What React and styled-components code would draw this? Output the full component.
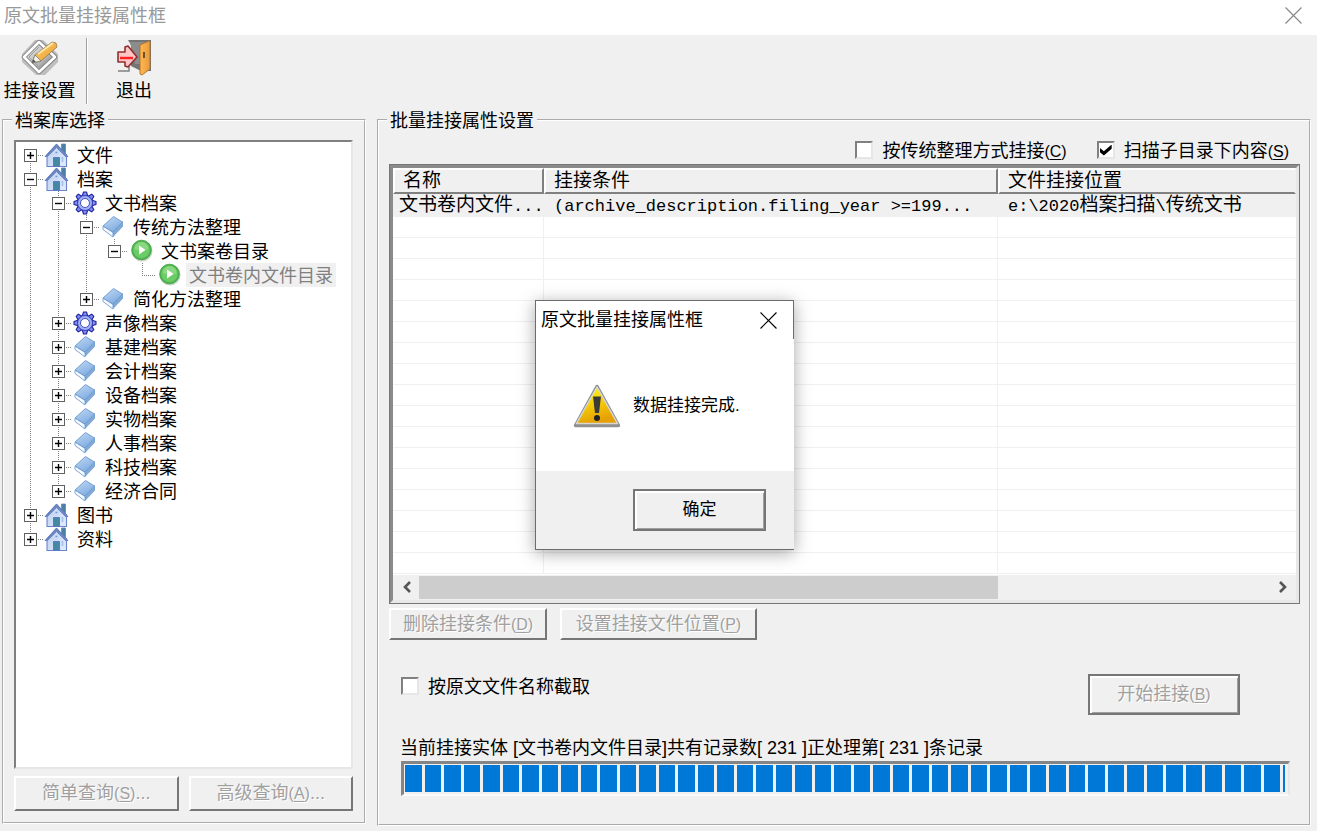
import React from 'react';
import styled, { createGlobalStyle, css } from 'styled-components';

const face = '#f0f0f0';
const shadow = '#767676';

const GlobalStyle = createGlobalStyle`
  *, *::before, *::after { box-sizing: border-box; }
  body {
    margin: 0;
    background: ${face};
    color: #000;
    font: 18px/24px "Liberation Sans", "Noto Sans CJK SC", sans-serif;
  }
  button, input { font: inherit; color: inherit; }
  ul { list-style: none; margin: 0; padding: 0; }
`;

const Window = styled.div`
  position: relative;
  min-height: 100vh;
  display: flex;
  flex-direction: column;
  background: ${face};
`;

const TitleBar = styled.header`
  display: flex;
  align-items: center;
  justify-content: space-between;
  height: 36px;
  padding: 0 15px 4px 4px;
  background: #fff;
  color: #999;
  border-bottom: 1px solid ${face};
`;

const Title = styled.h1`
  margin: 0;
  font-size: 18px;
  font-weight: 400;
`;

const CloseButton = styled.button`
  display: flex;
  padding: 0;
  border: 0;
  background: none;
`;

const Toolbar = styled.nav`
  display: flex;
  height: 72px;
  padding: 2px 3px;
`;

const ToolButton = styled.button`
  display: flex;
  flex-direction: column;
  align-items: center;
  width: ${(p) => (p.$wide ? 92 : 73)}px;
  padding: 0;
  border: 0;
  background: none;
  white-space: nowrap;
  svg { margin: 1px 0 3px; flex: none; }
`;

const Separator = styled.span`
  width: 2px;
  height: 66px;
  margin-left: 10px;
  background: linear-gradient(to right, #a0a0a0 1px, #fff 1px);
`;

const Panels = styled.main`
  flex: 1;
  display: flex;
  gap: 11px;
  padding: 0 6px 5px 2px;
`;

const Group = styled.fieldset`
  display: flex;
  flex-direction: column;
  min-width: 0;
  margin: 0;
  border: 2px groove #fff;
  padding: 0 10px;
  ${(p) => p.$side
    ? css`width: 364px; flex: none; padding: 8px 11px 11px 10px; margin-bottom: 2px;`
    : css`flex: 1; padding-bottom: 28px;`}
`;

const Legend = styled.legend`
  margin-left: -2px;
  padding: 2px 3px 0;
  line-height: 22px;
`;

const TreeBox = styled.ul`
  flex: 1;
  border: 2px solid;
  border-color: #808080 #e6e6e6 #e6e6e6 #808080;
  background: #fff;
  && { padding-top: 1px; }
`;

const TreeRow = styled.li`
  display: flex;
  align-items: center;
  height: 24px;
  > svg { flex: none; }
`;

const dotsDown = 'repeating-linear-gradient(to bottom, #808080 0 1px, transparent 1px 2px)';
const dotsAcross = 'repeating-linear-gradient(to right, #808080 0 1px, transparent 1px 2px)';

const Guide = styled.span`
  display: flex;
  align-items: center;
  justify-content: center;
  flex: none;
  width: 28px;
  height: 24px;
  background-repeat: no-repeat;
  ${(p) => {
    const images = [];
    if (p.$up) images.push(`${dotsDown} 14px 0 / 1px 12px no-repeat`);
    if (p.$down) images.push(`${dotsDown} 14px 12px / 1px 12px no-repeat`);
    if (p.$branch) images.push(`${dotsAcross} 14px 12px / 14px 1px no-repeat`);
    return images.length ? css`background: ${images.join(', ')};` : '';
  }}
`;

const Expander = styled.button`
  display: flex;
  width: 13px;
  height: 13px;
  padding: 0;
  border: 1px solid #606060;
  background: #fff;
`;

const NodeLabel = styled.span`
  margin-left: 5px;
  padding: 2px 3px 0;
  line-height: 22px;
  white-space: nowrap;
  ${(p) => p.$selected && css`background: ${face}; color: #808080;`}
`;

const QueryBar = styled.div`
  display: flex;
  gap: 10px;
  margin-top: 7px;
`;

const PushButton = styled.button`
  flex: ${(p) => (p.$fill ? '1' : 'none')};
  width: ${(p) => (p.$width ? `${p.$width}px` : 'auto')};
  height: ${(p) => p.$height || 32}px;
  padding: 0;
  background: ${face};
  white-space: nowrap;
  border: 2px solid;
  border-color: #fff ${shadow} ${shadow} #fff;
  ${(p) => p.$strong && css`
    border-color: ${shadow};
    box-shadow: inset 2px 2px #fff, inset -1px -1px #a0a0a0;
  `}
  &:disabled { color: #a0a0a0; text-shadow: 1px 1px #fff; }
`;

const Mnemonic = styled.span`
  font-size: 16px;
  u { text-underline-offset: 2px; }
`;

const Options = styled.div`
  display: flex;
  justify-content: flex-end;
  gap: 30px;
  padding: 6px 10px 2px 0;
`;

const CheckLabel = styled.label`
  display: flex;
  align-items: center;
  gap: 9px;
  height: 24px;
  white-space: nowrap;
  span { line-height: 22px; }
  > span { padding-top: 2px; }
`;

const CheckBox = styled.input.attrs({ type: 'checkbox' })`
  appearance: none;
  display: grid;
  place-items: center;
  width: 18px;
  height: 18px;
  margin: 0;
  background: #fff;
  border: 2px solid;
  border-color: #808080 #e6e6e6 #e6e6e6 #808080;
  &:checked::after {
    content: '';
    width: 12px;
    height: 11px;
    background: #000;
    clip-path: polygon(0 30%, 35% 62%, 100% 0, 100% 38%, 35% 100%, 0 68%);
  }
`;

const ListFrame = styled.div`
  flex: 1;
  display: flex;
  margin-right: -1px;
  border: 1px solid ${shadow};
`;

const ListInner = styled.div`
  flex: 1;
  min-width: 0;
  display: flex;
  flex-direction: column;
  border: 3px solid;
  border-color: #8a8a8a #e8e8e8 #e8e8e8 #8a8a8a;
  background: #fff;
`;

const Table = styled.table`
  width: 100%;
  table-layout: fixed;
  border-collapse: separate;
  border-spacing: 0;
  font-size: 19px;
`;

const HeadCell = styled.th`
  width: ${(p) => (p.$width ? `${p.$width}px` : 'auto')};
  height: 26px;
  padding: 0 0 0 8px;
  text-align: left;
  font-weight: 400;
  line-height: 22px;
  background: ${face};
  border: 2px solid;
  border-color: #fff ${(p) => (p.$width ? '#808080' : face)} #808080 #fff;
`;

const Cell = styled.td`
  height: 21px;
  padding: ${(p) => (p.$filled ? 2 : 0)}px 0 0 ${(p) => (p.$first ? 6 : 10)}px;
  line-height: 18px;
  white-space: nowrap;
  overflow: hidden;
  border-bottom: 1px solid ${face};
  border-right: ${(p) => (p.$last ? 0 : 1)}px solid ${face};
  background: ${(p) => (p.$filled ? face : '#fff')};
`;

const Mono = styled.span`
  font-family: "Liberation Mono", monospace;
  font-size: 17px;
  line-height: 18px;
`;

const ScrollBar = styled.div`
  display: flex;
  align-items: center;
  height: 25px;
  margin-top: auto;
  padding: 0 1px 1px;
  background: ${face};
`;

const ScrollButton = styled.button`
  display: flex;
  align-items: center;
  justify-content: center;
  width: 25px;
  height: 24px;
  padding: 0;
  border: 0;
  background: none;
`;

const ScrollTrack = styled.div`
  flex: 1;
  height: 23px;
`;

const ScrollThumb = styled.div`
  width: 68%;
  height: 100%;
  background: #cdcdcd;
`;

const ListActions = styled.div`
  display: flex;
  gap: 13px;
  margin-top: 4px;
`;

const StartRow = styled.div`
  display: flex;
  align-items: flex-start;
  justify-content: space-between;
  margin-top: 34px;
  padding: 0 59px 0 12px;
`;

const Status = styled.p`
  margin: 21px 0 1px;
  padding-left: 11px;
  white-space: nowrap;
`;

const Progress = styled.div`
  display: flex;
  gap: 3px;
  height: 35px;
  margin: 0 9px 0 12px;
  padding: 1px 3px 2px 1px;
  border: 3px solid;
  border-color: #858585 #e6e6e6 #fafafa #858585;
  border-right-width: 2px;
  border-bottom-width: 2px;
`;

const Block = styled.span`
  flex: ${(p) => (p.$partial ? '0 0 2px' : '1')};
  background: #0078d7;
`;

const Overlay = styled.div`
  position: absolute;
  inset: 0;
  display: grid;
  place-items: center;
  padding: 19px 0 0 12px;
`;

const Dialog = styled.section`
  width: 259px;
  border: 1px solid #6c6c6c;
  border-right: 0;
  background: #fff;
  box-shadow: 0 3px 16px rgba(0, 0, 0, 0.35);
`;

const DialogTitle = styled.header`
  display: flex;
  align-items: center;
  justify-content: space-between;
  height: 38px;
  padding: 0 16px 0 5px;
  border-right: 1px solid #6c6c6c;
`;

const DialogBody = styled.div`
  display: flex;
  align-items: center;
  gap: 12px;
  height: 132px;
  padding: 2px 0 0 37px;
  font-size: 17px;
`;

const DialogFooter = styled.footer`
  display: flex;
  justify-content: flex-end;
  height: 78px;
  padding: 18px 28px 0 0;
  background: ${face};
  font-size: 17px;
`;

const Cross = ({ size, color }) => (
  <svg width={size} height={size} viewBox="0 0 16 16" fill="none" stroke={color} strokeWidth="1.1">
    <path d="M.5.5l15 15M15.5.5l-15 15" />
  </svg>
);

const SettingsIcon = () => (
  <svg width="38" height="37" viewBox="0 0 38 37">
    <defs>
      <linearGradient id="plate" x1="0" y1="0" x2="1" y2="1">
        <stop offset="0" stopColor="#f4f4f4" /><stop offset="1" stopColor="#8c8c8c" />
      </linearGradient>
      <linearGradient id="pencil" x1="0" y1="0" x2="1" y2="1">
        <stop offset="0" stopColor="#ffd873" /><stop offset="1" stopColor="#e8952a" />
      </linearGradient>
    </defs>
    <path d="M14 1h8l15 14v8L24 36H15L1 23v-8z" fill="#a8a8a8" opacity=".7" />
    <path d="M18 3L3 18l15 15 16-15z" fill="url(#plate)" stroke="#808080" strokeWidth="4.500" strokeLinejoin="round" />
    <path d="M18 3L3 18l15 15 16-15z" fill="none" stroke="#fff" strokeWidth="2.600" strokeLinejoin="round" />
    <path d="M18 8L8 18l10 10 11-10" fill="none" stroke="#a0a0a0" strokeWidth="1" />
    <path d="M11 24l3-8L31 3l4 1 1 4-16 14z" fill="url(#pencil)" stroke="#9a7a48" strokeWidth=".8" strokeLinejoin="round" />
    <path d="M17 15L32 4" stroke="#ffe9ae" strokeWidth="1.6" />
    <path d="M11 24l3-8 6 6z" fill="#f4f0ea" stroke="#777" strokeWidth=".8" />
    <path d="M11 24l1.300-3.500 2.500 2z" fill="#555" />
  </svg>
);

const ExitIcon = () => (
  <svg width="36" height="37" viewBox="0 0 36 37">
    <defs>
      <linearGradient id="door"><stop offset="0" stopColor="#ffb850" /><stop offset="1" stopColor="#e99a3c" /></linearGradient>
    </defs>
    <path d="M12 1h23v31H25l-10-5V6z" fill="#747474" />
    <path d="M14 3h17v22H19z" fill="#8c8c8c" />
    <path d="M2 32h11v-6" fill="none" stroke="#808080" strokeWidth="1.5" />
    <path d="M24 6l9-4 1 1v27l-8 6-2-1z" fill="url(#door)" stroke="#a9712c" strokeWidth=".9" strokeLinejoin="round" />
    <path d="M28 13v6" stroke="#6e5128" strokeWidth="2" />
    <path d="M2 13h7V8l3-1 9 11-9 10-3-1v-4H2z" fill="#ffc4c4" stroke="#8f3030" strokeWidth="1.6" strokeLinejoin="round" />
    <path d="M4 19h13" stroke="#f22" strokeWidth="2.400" />
  </svg>
);

const HomeIcon = () => (
  <svg width="25" height="24" viewBox="0 0 25 24">
    <defs>
      <linearGradient id="wall" x1="0" y1="0" x2="1" y2="1">
        <stop offset="0" stopColor="#b9cdf0" /><stop offset="1" stopColor="#e3ecfb" />
      </linearGradient>
    </defs>
    <path d="M17.500 1h4v10h-4z" fill="#4a7fa6" stroke="#6a80c8" strokeWidth=".8" />
    <path d="M12.500 1.500L3 12v11.500h19.500V12z" fill="url(#wall)" stroke="#6a83cf" strokeWidth="1.100" />
    <path d="M12.500 1L1 13.500h2.500l9-9 9 9H24z" fill="#6d8ac0" stroke="#5f78c0" strokeWidth=".8" strokeLinejoin="round" />
    <path d="M9.500 14.500h6v9h-6z" fill="#4488a4" stroke="#5f78c8" />
    <path d="M11.500 9.500h2" stroke="#7d9bd4" strokeWidth="1.500" />
    <path d="M18.500 14v5" stroke="#a3bde6" strokeWidth="1.500" />
  </svg>
);

const GearIcon = () => (
  <svg width="25" height="24" viewBox="0 0 25 24">
    {[0, 45, 90, 135, 180, 225, 270, 315].map((a) => (
      <path key={a} d="M10.300 5L11.500 1h3l1.200 4z" fill="#7d90ee" stroke="#1f1fa0" strokeWidth="1.100" strokeLinejoin="round" transform={`rotate(${a} 13 12)`} />
    ))}
    <circle cx="13" cy="12" r="7.500" fill="#9fb1f6" stroke="#3a3ab8" strokeWidth=".9" />
    <circle cx="13" cy="12" r="4.500" fill="#fff" stroke="#4a4ac0" strokeWidth="1" />
  </svg>
);

const BookIcon = () => (
  <svg width="25" height="24" viewBox="0 0 25 24">
    <defs>
      <linearGradient id="cover" x1="0" y1="0" x2=".6" y2="1">
        <stop offset="0" stopColor="#c4dbf5" /><stop offset="1" stopColor="#7fabdf" />
      </linearGradient>
    </defs>
    <path d="M13 16l9.500-9.500v5L13 21.500z" fill="#7fa9d6" stroke="#6c9bd0" strokeWidth=".8" strokeLinejoin="round" />
    <path d="M3 11l10 6.500V22L3 14.500z" fill="#f6faff" stroke="#6f9ed2" strokeWidth=".9" strokeLinejoin="round" />
    <path d="M13.500 1.500l9 5.500L13 17 3 11z" fill="url(#cover)" stroke="#6c9bd0" strokeWidth=".9" strokeLinejoin="round" />
  </svg>
);

const PlayIcon = () => (
  <svg width="25" height="24" viewBox="0 0 25 24">
    <circle cx="14" cy="12" r="10.500" fill="#ccd6cc" />
    <circle cx="13.500" cy="11" r="9.800" fill="#4db54d" stroke="#3f9f42" strokeWidth=".8" />
    <circle cx="13.500" cy="11" r="8.200" fill="#6bcb66" />
    <path d="M6.500 10a7 7 0 0 1 14 0q-7 3-14 0z" fill="#96dd8d" opacity=".7" />
    <path d="M11 6.500v9l6.500-4.500z" fill="#fff" />
  </svg>
);

const WarningIcon = () => (
  <svg width="48" height="44" viewBox="0 0 48 44">
    <defs>
      <linearGradient id="warn" x1="0" y1="0" x2=".3" y2="1">
        <stop offset="0" stopColor="#ffff10" /><stop offset=".5" stopColor="#f7cf08" /><stop offset="1" stopColor="#e5a005" />
      </linearGradient>
    </defs>
    <path d="M24 2.500L2.500 41.500h43z" fill="#777" stroke="#909090" strokeWidth="3.500" strokeLinejoin="round" />
    <path d="M24 3L3.500 39.500h41z" fill="url(#warn)" stroke="#d8d8d0" strokeWidth="1.500" strokeLinejoin="round" />
    <path d="M20 12.500h8l-2 16.500h-4z" fill="#3a3a38" />
    <circle cx="24" cy="34" r="3" fill="#222" />
  </svg>
);

const Chevron = ({ right }) => (
  <svg width="12" height="12" viewBox="0 0 12 12" fill="none" stroke="#555" strokeWidth="2.600">
    <path d={right ? 'M3 1l5 5-5 5' : 'M9 1L4 6l5 5'} />
  </svg>
);

const icons = { home: HomeIcon, gear: GearIcon, book: BookIcon, play: PlayIcon };

const archives = ['基建档案', '会计档案', '设备档案', '实物档案', '人事档案', '科技档案', '经济合同'];
const tree = [
  { label: '文件', icon: 'home', closed: true },
  {
    label: '档案',
    icon: 'home',
    children: [
      {
        label: '文书档案',
        icon: 'gear',
        children: [
          {
            label: '传统方法整理',
            icon: 'book',
            children: [
              {
                label: '文书案卷目录',
                icon: 'play',
                children: [{ label: '文书卷内文件目录', icon: 'play', selected: true }],
              },
            ],
          },
          { label: '简化方法整理', icon: 'book', closed: true },
        ],
      },
      { label: '声像档案', icon: 'gear', closed: true },
      ...archives.map((label) => ({ label, icon: 'book', closed: true })),
    ],
  },
  { label: '图书', icon: 'home', closed: true },
  { label: '资料', icon: 'home', closed: true },
];

function TreeNodes({ nodes, lines = [] }) {
  return nodes.map((node, i) => {
    const more = i < nodes.length - 1;
    const Icon = icons[node.icon];
    return (
      <React.Fragment key={node.label}>
        <TreeRow>
          {lines.map((on, k) => <Guide key={k} $up={on} $down={on} />)}
          <Guide $up={lines.length > 0 || i > 0} $down={more} $branch>
            {(node.closed || node.children) && (
              <Expander aria-label={node.closed ? `展开${node.label}` : `折叠${node.label}`}>
                <svg width="11" height="11" viewBox="0 0 11 11" stroke="#000" strokeWidth="1.400">
                  <path d={node.closed ? 'M2 5.500h7M5.500 2v7' : 'M2 5.500h7'} />
                </svg>
              </Expander>
            )}
          </Guide>
          <Icon />
          <NodeLabel $selected={node.selected}>{node.label}</NodeLabel>
        </TreeRow>
        {node.children && <TreeNodes nodes={node.children} lines={[...lines, more]} />}
      </React.Fragment>
    );
  });
}

const Key = ({ k }) => <Mnemonic>(<u>{k}</u>)</Mnemonic>;

export default function App() {
  return (
    <>
      <GlobalStyle />
      <Window>
        <TitleBar>
          <Title>原文批量挂接属性框</Title>
          <CloseButton aria-label="关闭窗口"><Cross size={17} color="#888" /></CloseButton>
        </TitleBar>
        <Toolbar>
          <ToolButton><SettingsIcon />挂接设置</ToolButton>
          <Separator />
          <ToolButton $wide><ExitIcon />退出</ToolButton>
        </Toolbar>
        <Panels>
          <Group $side>
            <Legend>档案库选择</Legend>
            <TreeBox><TreeNodes nodes={tree} /></TreeBox>
            <QueryBar>
              <PushButton $fill $height={35} disabled>简单查询<Key k="S" />...</PushButton>
              <PushButton $fill $height={35} disabled>高级查询<Key k="A" />...</PushButton>
            </QueryBar>
          </Group>
          <Group>
            <Legend>批量挂接属性设置</Legend>
            <Options>
              <CheckLabel><CheckBox /><span>按传统整理方式挂接<Key k="C" /></span></CheckLabel>
              <CheckLabel><CheckBox defaultChecked /><span>扫描子目录下内容<Key k="S" /></span></CheckLabel>
            </Options>
            <ListFrame>
              <ListInner>
                <Table>
                  <thead>
                    <tr>
                      <HeadCell $width={151}>名称</HeadCell>
                      <HeadCell $width={454}>挂接条件</HeadCell>
                      <HeadCell>文件挂接位置</HeadCell>
                    </tr>
                  </thead>
                  <tbody>
                    <tr>
                      <Cell $filled $first>文书卷内文件<Mono>...</Mono></Cell>
                      <Cell $filled><Mono>(archive_description.filing_year &gt;=199...</Mono></Cell>
                      <Cell $filled $last><Mono>e:\2020</Mono>档案扫描<Mono>\</Mono>传统文书</Cell>
                    </tr>
                    {Array.from({ length: 17 }, (_, i) => (
                      <tr key={i}><Cell /><Cell /><Cell $last /></tr>
                    ))}
                  </tbody>
                </Table>
                <ScrollBar>
                  <ScrollButton aria-label="向左滚动"><Chevron /></ScrollButton>
                  <ScrollTrack><ScrollThumb /></ScrollTrack>
                  <ScrollButton aria-label="向右滚动"><Chevron right /></ScrollButton>
                </ScrollBar>
              </ListInner>
            </ListFrame>
            <ListActions>
              <PushButton $width={158} disabled>删除挂接条件<Key k="D" /></PushButton>
              <PushButton $width={197} disabled>设置挂接文件位置<Key k="P" /></PushButton>
            </ListActions>
            <StartRow>
              <CheckLabel><CheckBox /><span>按原文文件名称截取</span></CheckLabel>
              <PushButton $width={152} $height={41} $strong disabled>开始挂接<Key k="B" /></PushButton>
            </StartRow>
            <Status>当前挂接实体 [文书卷内文件目录]共有记录数[ 231 ]正处理第[ 231 ]条记录</Status>
            <Progress role="progressbar" aria-valuenow={231} aria-valuemax={231} aria-label="挂接进度">
              {Array.from({ length: 45 }, (_, i) => <Block key={i} />)}
              <Block $partial />
            </Progress>
          </Group>
        </Panels>
        <Overlay>
          <Dialog role="dialog" aria-label="原文批量挂接属性框">
            <DialogTitle>
              <span>原文批量挂接属性框</span>
              <CloseButton aria-label="关闭"><Cross size={17} color="#000" /></CloseButton>
            </DialogTitle>
            <DialogBody><WarningIcon /><span>数据挂接完成.</span></DialogBody>
            <DialogFooter>
              <PushButton $width={133} $height={42} $strong>确定</PushButton>
            </DialogFooter>
          </Dialog>
        </Overlay>
      </Window>
    </>
  );
}
